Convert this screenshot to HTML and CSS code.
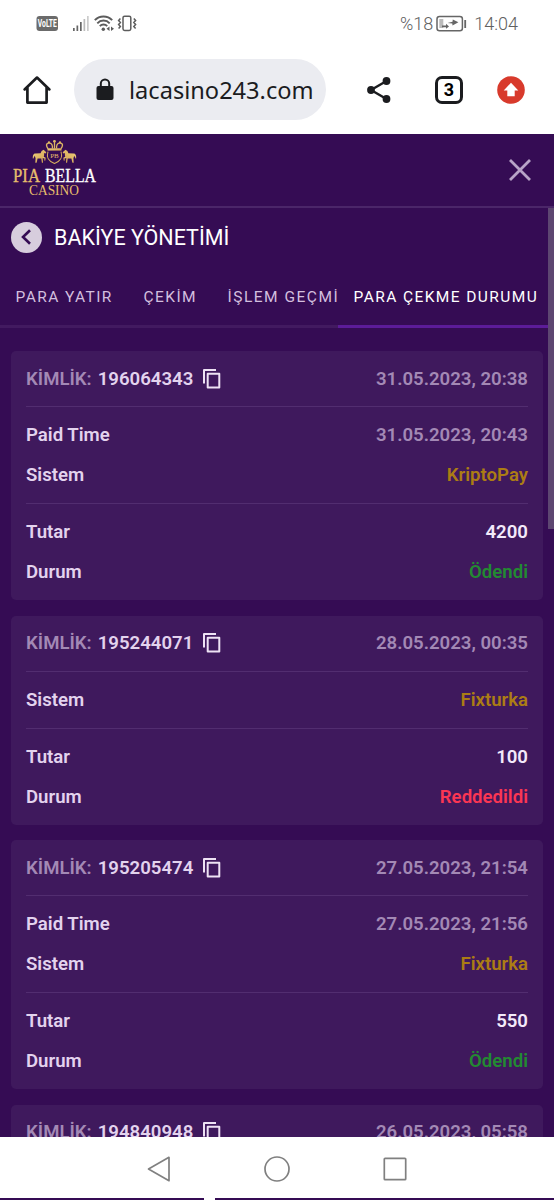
FILE: index.html
```html
<!DOCTYPE html>
<html lang="tr">
<head>
    <meta charset="UTF-8">
    <meta name="viewport" content="width=device-width, initial-scale=1.0">
    <title>Bakiye Yönetimi</title>
    <link rel="stylesheet" href="styles.css">
</head>
<body>
    <!-- Phone status bar -->
    <div class="status-bar">
        <svg class="status-icons" width="104" height="18" viewBox="0 0 104 18">
            <rect x="0.5" y="1" width="21.5" height="15" rx="3" fill="#6b6b6b"/>
            <text class="volte" x="1.8" y="12" textLength="19" lengthAdjust="spacingAndGlyphs">VoLTE</text>
            <g fill="#666">
                <rect x="37" y="13" width="1.7" height="3"/>
                <rect x="40.5" y="10.5" width="1.7" height="5.5"/>
                <rect x="44" y="7" width="1.7" height="9"/>
                <rect x="47.5" y="4" width="1.7" height="12" fill="#bbb"/>
                <rect x="51" y="1" width="1.7" height="15" fill="#ccc"/>
            </g>
            <g fill="none" stroke="#5c5c5c" stroke-width="1.9">
                <path d="M58.8 5.2a12 12 0 0 1 17.4 0M61.3 8.3a8.4 8.4 0 0 1 12.4 0M63.8 11.2a5 5 0 0 1 7.4 0"/>
                <rect x="87" y="1.2" width="7.8" height="14.2" rx="1.6" stroke-width="1.5"/>
                <path d="M84.4 3.5l-1.8 2 1.8 2-1.8 2 1.8 2-1.8 2M97.8 3.5l1.8 2-1.8 2 1.8 2-1.8 2 1.8 2" stroke-width="1.5"/>
            </g>
            <circle cx="67.3" cy="14.2" r="1.7" fill="#5c5c5c"/>
            <path d="M73.5 11.4v4.6l-3-2.3zM75 11.4v4.6l3-2.3z" fill="#5c5c5c"/>
        </svg>
        <div class="status-right">
            <span class="battery-text">%18</span>
            <svg width="31" height="18" viewBox="0 0 31 18">
                <rect x="1" y="1.5" width="25.4" height="14.2" rx="2.5" fill="none" stroke="#666" stroke-width="1.5"/>
                <rect x="28.3" y="5" width="1.8" height="8" fill="#666"/>
                <rect x="3.3" y="4" width="4" height="9" fill="#bbb"/>
                <path d="M6 10.4l4 .2V8.8l3 2.7-3 2.3v-1.600l-4 .1zM11.5 7.9l5-1.1.3-2.3 5.6 2.7-5.9 3.3-.2-2z" fill="#666"/>
            </svg>
            <span class="clock">14:04</span>
        </div>
    </div>

    <!-- Browser toolbar -->
    <div class="toolbar">
        <svg class="home-icon" width="30" height="30" viewBox="0 0 30 30" fill="none" stroke="#1b1c1f" stroke-width="2.7" stroke-linejoin="round" stroke-linecap="round">
            <path d="M2.6 14.4L15 2.6l12.4 11.8M5.4 12.4v15.2h19.2V12.4"/>
        </svg>
        <div class="address">
            <svg width="18" height="23" viewBox="0 0 18 23">
                <rect x="0.5" y="8" width="17" height="14" rx="2" fill="#1b1c1f"/>
                <path d="M4.8 9V5.6a4.2 4.2 0 0 1 8.4 0V9" fill="none" stroke="#1b1c1f" stroke-width="2"/>
            </svg>
            <span>lacasino243.com</span>
        </div>
        <svg class="share-icon" width="24" height="26" viewBox="0 0 24 26" fill="#1b1c1f">
            <path d="M19.5 4L4 13l15.5 9" fill="none" stroke="#1b1c1f" stroke-width="2.4"/>
            <circle cx="19.5" cy="4" r="3.9"/>
            <circle cx="4" cy="13" r="3.9"/>
            <circle cx="19.5" cy="22" r="3.9"/>
        </svg>
        <div class="tab-count">3</div>
        <svg class="update-icon" width="28" height="28" viewBox="0 0 28 28">
            <circle cx="14" cy="14" r="13.8" fill="#d83a2c"/>
            <path d="M14 6.8l7.3 7.7h-3.6v5.8h-7.4v-5.8H6.7z" fill="#fff"/>
        </svg>
    </div>

    <div class="site">
        <div class="site-header">
            <svg class="logo" width="86" height="60" viewBox="0 0 86 60">
                <defs>
                    <linearGradient id="gold" x1="0" x2="1" y1="0" y2="1">
                        <stop offset="0" stop-color="#f1d27e"/>
                        <stop offset="1" stop-color="#cf9f4d"/>
                    </linearGradient>
                    <g id="horse">
                        <path d="M1 20c-.6-3 .2-5.5 2.4-5.5l5.2-.2 1-2.2 2-1.3 2.7 2.4-.7 1.3-1.4-.4-.2 3.2-1.3 1.8.3 4.6H9.9l-.6-4.2H5.6l-1 4.2H3.3l.3-4.3-.8-2.7z"/>
                        <path d="M11.2 17.6l2.5 1.1-.5 3-.9-.1.2-2.2-2-.5z"/>
                    </g>
                </defs>
                <!-- Crown -->
                <g fill="none" stroke="#dcb564" stroke-width="1.3">
                    <path d="M36 9.6C33 5.5 35 3.6 38 4.2c2.4.6 2.6 3 2.4 5.2M49 9.6c3-4.1 1-6-2-5.4-2.4.6-2.6 3-2.4 5.2M42.5 9.4V3"/>
                </g>
                <g fill="url(#gold)">
                    <path d="M35.5 9.3h14v2.3h-14z"/>
                    <circle cx="42.5" cy="2.3" r="1.4"/>
                    <circle cx="37" cy="3.4" r="1.1"/>
                    <circle cx="48" cy="3.4" r="1.1"/>
                    <use href="#horse" x="20" y="0"/>
                    <use href="#horse" transform="translate(65 0) scale(-1 1)"/>
                </g>
                <!-- Shield -->
                <path d="M36 12.6c-1.9 6.5.5 9.6 6.5 11.8 6-2.2 8.4-5.3 6.5-11.8" fill="none" stroke="#d6ad5e" stroke-width="1.1"/>
                <text class="logo-mark" x="42.5" y="19" text-anchor="middle">PB</text>
                <text class="logo-name" x="1" y="42.5" textLength="27" lengthAdjust="spacingAndGlyphs">PIA</text>
                <text class="logo-name light" x="33" y="42.5" textLength="51" lengthAdjust="spacingAndGlyphs">BELLA</text>
                <text class="logo-sub" x="17" y="55.7" textLength="50" lengthAdjust="spacingAndGlyphs">CASINO</text>
            </svg>
            <svg width="22" height="22" viewBox="0 0 22 22" stroke="#b8a3c8" stroke-width="2.8">
                <path d="M1 1l20 20M21 1L1 21"/>
            </svg>
        </div>

        <div class="content">
            <div class="page-title">
                <div class="back">
                    <svg width="10" height="16" viewBox="0 0 10 16" fill="none" stroke="#350c54" stroke-width="2.6">
                        <path d="M9 1.2L2 8l7 6.8"/>
                    </svg>
                </div>
                <h1>BAKİYE YÖNETİMİ</h1>
            </div>

            <div class="tabs">
                <div class="tab deposit">PARA YATIR</div>
                <div class="tab withdraw">ÇEKİM</div>
                <div class="tab history">İŞLEM GEÇMİ</div>
                <div class="tab active">PARA ÇEKME DURUMU</div>
            </div>

            <div class="cards">
                <div class="card">
                    <div class="group head">
                        <div class="row">
                            <span class="muted">KİMLİK:</span><span class="id">196064343</span>
                            <svg class="copy" width="18" height="20" viewBox="0 0 18 20"><path d="M1 14.5V1h12M4.7 4.7h11.6v13.8H4.7z"/></svg>
                            <span class="value muted">31.05.2023, 20:38</span>
                        </div>
                    </div>
                    <div class="group">
                        <div class="row">Paid Time<span class="value muted">31.05.2023, 20:43</span></div>
                        <div class="row">Sistem<span class="value system">KriptoPay</span></div>
                    </div>
                    <div class="group">
                        <div class="row">Tutar<span class="value amount">4200</span></div>
                        <div class="row">Durum<span class="value paid">Ödendi</span></div>
                    </div>
                </div>

                <div class="card">
                    <div class="group head">
                        <div class="row">
                            <span class="muted">KİMLİK:</span><span class="id">195244071</span>
                            <svg class="copy" width="18" height="20" viewBox="0 0 18 20"><path d="M1 14.5V1h12M4.7 4.7h11.6v13.8H4.7z"/></svg>
                            <span class="value muted">28.05.2023, 00:35</span>
                        </div>
                    </div>
                    <div class="group">
                        <div class="row">Sistem<span class="value system">Fixturka</span></div>
                    </div>
                    <div class="group">
                        <div class="row">Tutar<span class="value amount">100</span></div>
                        <div class="row">Durum<span class="value rejected">Reddedildi</span></div>
                    </div>
                </div>

                <div class="card">
                    <div class="group head">
                        <div class="row">
                            <span class="muted">KİMLİK:</span><span class="id">195205474</span>
                            <svg class="copy" width="18" height="20" viewBox="0 0 18 20"><path d="M1 14.5V1h12M4.7 4.7h11.6v13.8H4.7z"/></svg>
                            <span class="value muted">27.05.2023, 21:54</span>
                        </div>
                    </div>
                    <div class="group">
                        <div class="row">Paid Time<span class="value muted">27.05.2023, 21:56</span></div>
                        <div class="row">Sistem<span class="value system">Fixturka</span></div>
                    </div>
                    <div class="group">
                        <div class="row">Tutar<span class="value amount">550</span></div>
                        <div class="row">Durum<span class="value paid">Ödendi</span></div>
                    </div>
                </div>

                <div class="card">
                    <div class="group head">
                        <div class="row">
                            <span class="muted">KİMLİK:</span><span class="id">194840948</span>
                            <svg class="copy" width="18" height="20" viewBox="0 0 18 20"><path d="M1 14.5V1h12M4.7 4.7h11.6v13.8H4.7z"/></svg>
                            <span class="value muted">26.05.2023, 05:58</span>
                        </div>
                    </div>
                </div>
            </div>

            <div class="scrollbar"></div>
        </div>
    </div>

    <!-- Android navigation -->
    <div class="nav-bar">
        <svg width="24" height="26" viewBox="0 0 24 26"><path d="M1.5 13L22 1.3v23.4z"/></svg>
        <svg width="26" height="26" viewBox="0 0 26 26"><circle cx="13" cy="13" r="12"/></svg>
        <svg width="24" height="24" viewBox="0 0 24 24"><rect x="1.3" y="1.3" width="21.4" height="21.4" rx="0.8"/></svg>
    </div>
    <div class="bottom-edge"></div>
</body>
</html>
```
FILE: styles.css
```css
:root {
    --bg: #350c54;
    --card: #3f195d;
    --line: #522d70;
    --text: #e3d3ee;
    --muted: #a389b5;
}

* {
    margin: 0;
    padding: 0;
    box-sizing: border-box;
}

body {
    height: 1200px;
    overflow: hidden;
    display: flex;
    flex-direction: column;
    background: #fff;
    font-family: Roboto, "Liberation Sans", sans-serif;
}

svg {
    display: block;
    flex-shrink: 0;
}

/* Status bar */
.status-bar {
    height: 47px;
    padding: 0 36px;
    display: flex;
    justify-content: space-between;
    align-items: center;
}

.volte {
    font-size: 10px;
    font-weight: 700;
    fill: #fff;
}

.status-right {
    display: flex;
    align-items: center;
    color: #606060;
    font-size: 18px;
    font-weight: 300;
}

.battery-text {
    margin-right: 3px;
}

.clock {
    margin-left: 7px;
}

/* Toolbar */
.toolbar {
    height: 87px;
    padding: 0 29px 2px 22px;
    display: flex;
    align-items: center;
}

.address {
    width: 252px;
    height: 61px;
    margin: 0 41px 0 22px;
    padding-left: 22px;
    border-radius: 31px;
    background: #ebecf1;
    display: flex;
    align-items: center;
    gap: 15px;
    color: #1b1c1f;
    font-family: "Noto Sans", sans-serif;
    font-size: 23.6px;
}

.tab-count {
    width: 28px;
    height: 28px;
    margin: 0 34px 0 44px;
    border: 3px solid #1b1c1f;
    border-radius: 7px;
    text-align: center;
    line-height: 22px;
    font-size: 18px;
    font-weight: 700;
}

/* Site */
.site {
    flex: 1;
    min-height: 0;
    overflow: hidden;
    background: var(--bg);
}

.site-header {
    height: 74px;
    padding: 0 23px 0 12px;
    border-bottom: 2px solid #4b2669;
    display: flex;
    align-items: center;
    justify-content: space-between;
}

.logo {
    margin-bottom: 3px;
}

.logo text {
    font-family: "Liberation Serif", serif;
    fill: #e6bd6c;
}

.logo .logo-mark {
    font-size: 7px;
}

.logo .logo-name {
    font-size: 18px;
    stroke: #e6bd6c;
    stroke-width: 0.3;
}

.logo .light {
    fill: #fff;
    stroke: #fff;
}

.logo .logo-sub {
    font-size: 14px;
}

.content {
    position: relative;
}

.page-title {
    height: 58px;
    padding-left: 11px;
    display: flex;
    align-items: center;
    gap: 12px;
}

.back {
    width: 31px;
    height: 31px;
    padding-right: 2px;
    border-radius: 50%;
    background: #d7cddd;
    display: flex;
    align-items: center;
    justify-content: center;
}

h1 {
    color: #fff;
    font-size: 21.5px;
    font-weight: 400;
}

.tabs {
    height: 62px;
    display: flex;
}

.tab {
    flex-shrink: 0;
    padding-left: 15.5px;
    border-bottom: 3px solid #421a60;
    color: #d3bfdf;
    font-size: 15.5px;
    letter-spacing: 1.42px;
    line-height: 62px;
    white-space: nowrap;
    overflow: hidden;
}

.deposit {
    width: 128px;
}

.withdraw {
    width: 84px;
}

.history {
    width: 126px;
    letter-spacing: 1.5px;
}

.tab.active {
    width: 216px;
    border-color: #5c1c98;
    color: #fff;
}

.cards {
    padding: 23px 11px 0;
    display: flex;
    flex-direction: column;
    gap: 15.6px;
}

.card {
    padding: 0 15px;
    border-radius: 5px;
    background: var(--card);
    color: var(--text);
    font-size: 18.6px;
    font-weight: 600;
}

.group {
    padding: 8px 0;
    border-bottom: 1px solid var(--line);
}

.group.head {
    padding: 7.5px 0;
}

.group:last-child {
    border-bottom: none;
}

.row {
    height: 40px;
    display: flex;
    align-items: center;
}

.id {
    margin-left: 6px;
}

.copy {
    margin-left: 10px;
    fill: none;
    stroke: #eee2f4;
    stroke-width: 2;
    stroke-linejoin: round;
}

.value {
    margin-left: auto;
}

.muted {
    color: var(--muted);
}

.system {
    color: #ac7d14;
}

.amount {
    color: #f3e9fa;
}

.paid {
    color: #238a32;
}

.rejected {
    color: #fb3653;
}

.scrollbar {
    position: absolute;
    top: 0;
    right: 0;
    width: 6px;
    height: 321px;
    background: #5d4671;
}

/* Bottom navigation */
.nav-bar {
    height: 61px;
    padding: 2px 0 0 147px;
    display: flex;
    align-items: center;
    gap: 93px;
    background: #fff;
}

.nav-bar svg {
    fill: none;
    stroke: #808080;
    stroke-width: 1.7;
    stroke-linejoin: round;
}

.bottom-edge {
    height: 2px;
    background: linear-gradient(90deg, transparent 204px, #fff 204px, #fff 215px, transparent 215px), #350c54;
}
```
